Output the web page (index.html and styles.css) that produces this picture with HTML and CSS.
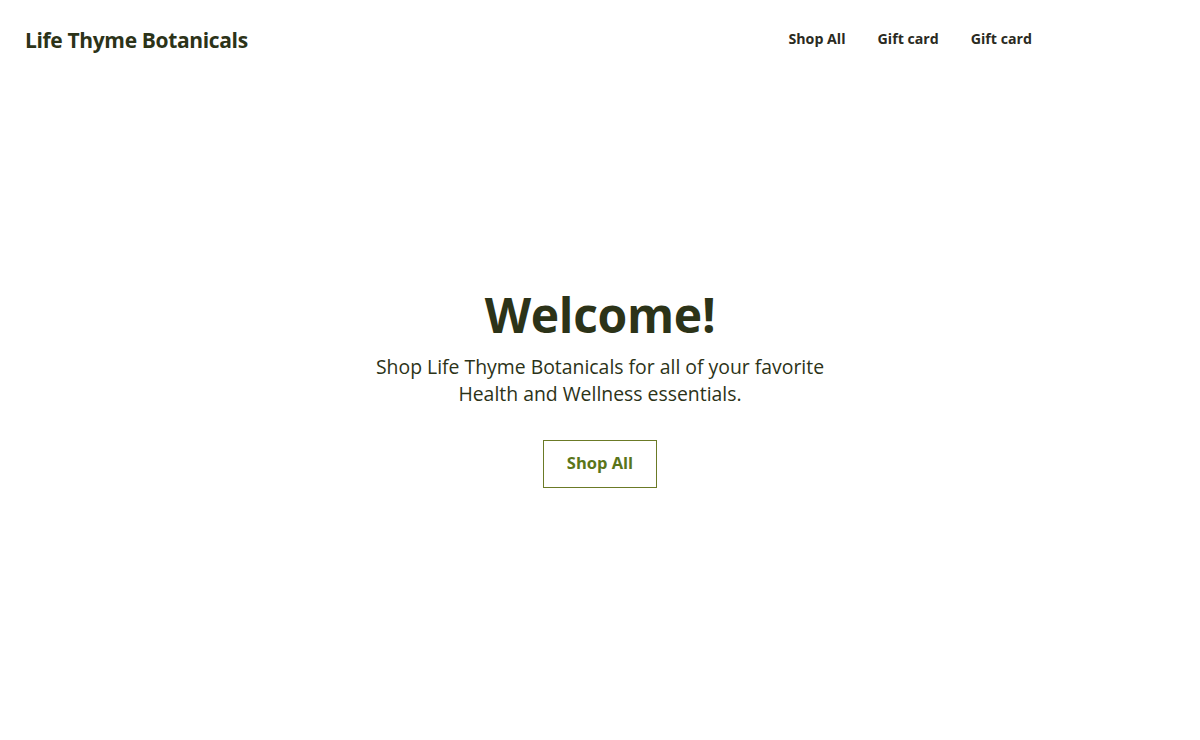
FILE: index.html
```html
<!DOCTYPE html>
<html lang="en">
<head>
<meta charset="utf-8">
<title>Life Thyme Botanicals</title>
<link rel="stylesheet" href="styles.css">
</head>
<body>
<header class="site-header">
  <a class="brand" href="#">Life Thyme Botanicals</a>
  <nav class="nav">
    <a href="#">Shop All</a>
    <a href="#">Gift card</a>
    <a href="#">Gift card</a>
  </nav>
</header>
<main class="hero">
  <h1 class="hero-title">Welcome!</h1>
  <p class="hero-text">Shop Life Thyme Botanicals for all of your favorite<br>Health and Wellness essentials.</p>
  <a class="hero-btn" href="#">Shop All</a>
</main>
</body>
</html>
```
FILE: styles.css
```css
* { box-sizing: border-box; }
html, body { margin: 0; padding: 0; }
body {
  background: #fff;
  color: #2c3318;
  font-family: "Open Sans", "Noto Sans", sans-serif;
  height: 740px;
  display: flex;
  flex-direction: column;
}
a { text-decoration: none; color: inherit; }
.site-header {
  display: flex;
  align-items: center;
  height: 80px;
  padding: 0 168px 0 25px;
}
.brand {
  font-size: 21px;
  font-weight: 700;
  letter-spacing: -0.35px;
  color: #2c3318;
}
.nav {
  margin-left: auto;
  display: flex;
  gap: 32px;
  padding-bottom: 4px;
}
.nav a {
  font-size: 14.2px;
  font-weight: 700;
  color: #2a2a22;
}
.hero {
  flex: 1;
  display: flex;
  flex-direction: column;
  align-items: center;
  padding-top: 205px;
}
.hero-title {
  margin: 0;
  font-size: 48px;
  font-weight: 700;
  line-height: 60px;
  letter-spacing: -0.3px;
  color: #2c3318;
}
.hero-text {
  margin: 8px 0 0;
  font-size: 19.4px;
  line-height: 27px;
  text-align: center;
  color: #2c3318;
}
.hero-btn {
  margin-top: 33px;
  width: 114px;
  height: 48px;
  display: flex;
  align-items: center;
  justify-content: center;
  padding-bottom: 3px;
  border: 1px solid #6b7a26;
  color: #5a7519;
  font-size: 16.5px;
  font-weight: 700;
}
```
